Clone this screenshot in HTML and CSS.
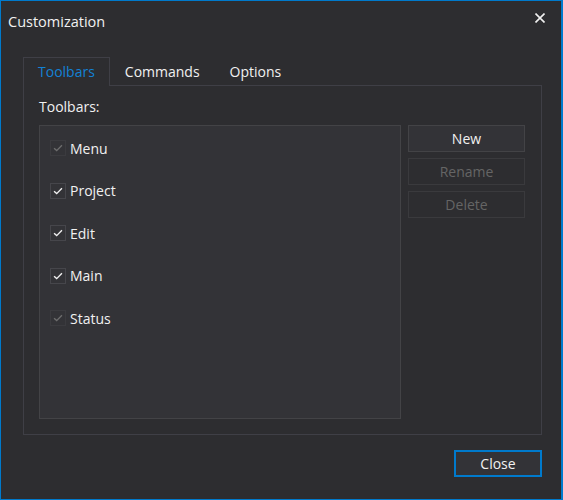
FILE: index.html
```html
<!DOCTYPE html>
<html>
<head>
<meta charset="utf-8">
<link rel="stylesheet" href="styles.css">
</head>
<body>
<div class="window">
  <div class="titlebar">
    <span class="title">Customization</span>
    <svg class="close-x" width="10" height="10" viewBox="0 0 10 10"><path d="M0.5 0.5 L9.5 9.5 M9.5 0.5 L0.5 9.5" stroke="#f1f1f1" stroke-width="1.6"/></svg>
  </div>
  <div class="content">
    <div class="tabs">
      <div class="tab active">Toolbars</div>
      <div class="tab">Commands</div>
      <div class="tab">Options</div>
    </div>
    <div class="panel">
      <div class="label">Toolbars:</div>
      <div class="panel-body">
        <div class="list">
          <div class="row"><span class="cb disabled"><svg viewBox="0 0 16 16"><path d="M3.5 8.2 L6.5 11 L12.5 4.8" fill="none" stroke-width="1.6"/></svg></span><span>Menu</span></div>
          <div class="row"><span class="cb"><svg viewBox="0 0 16 16"><path d="M3.5 8.2 L6.5 11 L12.5 4.8" fill="none" stroke-width="1.6"/></svg></span><span>Project</span></div>
          <div class="row"><span class="cb"><svg viewBox="0 0 16 16"><path d="M3.5 8.2 L6.5 11 L12.5 4.8" fill="none" stroke-width="1.6"/></svg></span><span>Edit</span></div>
          <div class="row"><span class="cb"><svg viewBox="0 0 16 16"><path d="M3.5 8.2 L6.5 11 L12.5 4.8" fill="none" stroke-width="1.6"/></svg></span><span>Main</span></div>
          <div class="row"><span class="cb disabled"><svg viewBox="0 0 16 16"><path d="M3.5 8.2 L6.5 11 L12.5 4.8" fill="none" stroke-width="1.6"/></svg></span><span>Status</span></div>
        </div>
        <div class="buttons">
          <div class="btn">New</div>
          <div class="btn off">Rename</div>
          <div class="btn off">Delete</div>
        </div>
      </div>
    </div>
    <div class="footer">
      <div class="btn close">Close</div>
    </div>
  </div>
</div>
</body>
</html>
```
FILE: styles.css
```css
* { box-sizing: border-box; }
html, body { margin: 0; padding: 0; background: #2d2d30; }
body {
  font-family: "Open Sans", "Noto Sans", sans-serif;
  font-size: 14px;
  color: #f1f1f1;
}
.window {
  width: 563px;
  height: 500px;
  background: #2d2d30;
  border-style: solid;
  border-color: #007acc;
  border-width: 1px 2px 1px 1px;
  display: flex;
  flex-direction: column;
}
.titlebar {
  height: 56px;
  display: flex;
  align-items: flex-start;
  justify-content: space-between;
  padding: 11px 16px 0 7px;
}
.title { font-size: 14.5px; line-height: 20px; }
.close-x { margin-top: 1px; }
.content {
  padding: 0 19px 0 22px;
  display: flex;
  flex-direction: column;
}
.tabs { display: flex; height: 29px; position: relative; z-index: 1; }
.tab {
  padding: 0 14px 0 14px;
  line-height: 27px;
  border: 1px solid transparent;
  border-bottom: none;
}
.tab.active {
  color: #1382d6;
  border-color: #3f3f46;
  background: #2d2d30;
  height: 29px;
}
.panel {
  border: 1px solid #3f3f46;
  margin-top: -1px;
  height: 350px;
  padding: 11px 15px 15px 15px;
  display: flex;
  flex-direction: column;
}
.label { line-height: 20px; height: 28px; }
.panel-body { display: flex; flex: 1; gap: 7px; }
.list {
  width: 362px;
  background: #333337;
  border: 1px solid #434346;
  padding-top: 1px;
}
.row {
  height: 42.5px;
  display: flex;
  align-items: center;
  padding-left: 10px;
  gap: 4px;
}
.cb {
  width: 16px; height: 16px;
  border: 1px solid #46464b;
  display: inline-block;
}
.cb svg { width: 14px; height: 14px; display: block; stroke: #f1f1f1; }
.cb.disabled { border-color: #3b3b3f; }
.cb.disabled svg { stroke: #6d6d6d; }
.buttons { display: flex; flex-direction: column; gap: 6px; width: 117px; }
.btn {
  height: 27px;
  border: 1px solid #434346;
  background: #333337;
  text-align: center;
  line-height: 25px;
}
.btn.off { color: #656565; border-color: #3a3a3d; background: #2d2d30; }
.footer { display: flex; justify-content: flex-end; padding-top: 15px; }
.btn.close {
  width: 88px;
  border: 2px solid #007acc;
  line-height: 23px;
}
```
